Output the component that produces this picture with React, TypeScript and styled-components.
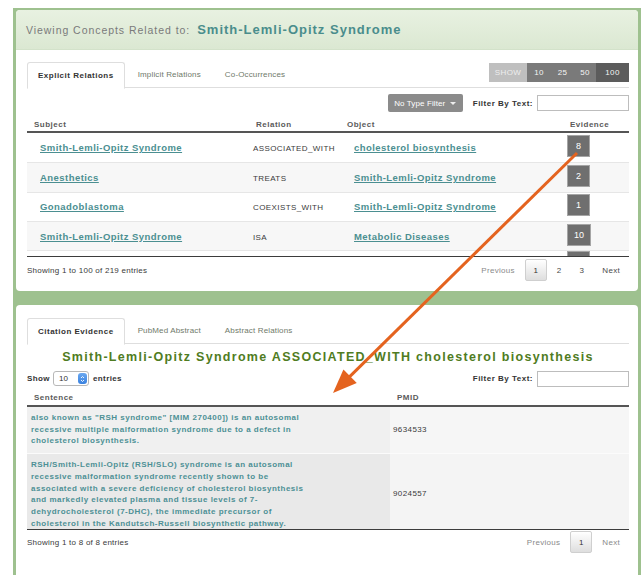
import React from 'react';
import styled, { createGlobalStyle, css } from 'styled-components';

const GlobalStyle = createGlobalStyle`
  html, body { margin: 0; padding: 0; background: #fff; }
  body { font-family: "Liberation Sans", Arial, sans-serif; color: #333; }
  * { box-sizing: border-box; }
`;

const Page = styled.div`
  position: relative;
  width: 642px;
  height: 575px;
  overflow: hidden;
  padding: 8px 1px 0 13px;
`;

const Frame = styled.div`
  height: 100%;
  background: #9ec18f;
  padding: 2px 3px 0 3px;
  display: flex;
  flex-direction: column;
  gap: 14px;
`;

const Panel = styled.section<{ $height?: number }>`
  background: #fff;
  border-radius: 4px;
  overflow: hidden;
  ${p => (p.$height ? css`height: ${p.$height}px; flex: none;` : css`flex: 1; border-radius: 4px 4px 0 0;`)}
`;

const Header = styled.header`
  height: 40px;
  display: flex;
  align-items: center;
  padding-left: 10px;
  background: linear-gradient(#e8f1e1, #dbe8d2);
  border-bottom: 1px solid #d3e2ca;
`;

const HeaderLead = styled.span`
  font-size: 10.5px;
  letter-spacing: 0.95px;
  color: #7a7a7a;
  margin-right: 7px;
`;

const HeaderConcept = styled.span`
  font-size: 13px;
  font-weight: 700;
  letter-spacing: 1px;
  color: #4a8d8c;
`;

const Body = styled.div<{ $top: number }>`
  padding: ${p => p.$top}px 9px 0 11px;
`;

const TabBar = styled.div`
  display: flex;
  align-items: flex-start;
  height: 26px;
  border-bottom: 1px solid #dedede;
`;

const Tab = styled.div<{ $active?: boolean }>`
  height: 26px;
  padding: 0 11px;
  margin-right: 2px;
  line-height: 25px;
  font-size: 8px;
  letter-spacing: 0.15px;
  white-space: nowrap;
  color: #6f7a6a;
  ${p =>
    p.$active &&
    css`
      padding: 0 10px;
      height: 27px;
      font-weight: 700;
      letter-spacing: 0.5px;
      color: #333;
      background: #fff;
      border: 1px solid #dedede;
      border-bottom-color: #fff;
      border-radius: 3px 3px 0 0;
    `}
`;

const ShowGroup = styled.div`
  margin-left: auto;
  margin-top: 1px;
  display: flex;
  height: 19px;
`;

const ShowButton = styled.div<{ $tone: 'label' | 'mid' | 'dark'; $w: number }>`
  width: ${p => p.$w}px;
  display: flex;
  align-items: center;
  justify-content: center;
  font-size: 8px;
  letter-spacing: 0.4px;
  color: ${p => (p.$tone === 'label' ? '#eeeeee' : '#f4f4f4')};
  background: ${p => (p.$tone === 'label' ? '#bfbfbf' : p.$tone === 'mid' ? '#7a7a7a' : '#5c5c5c')};
`;

const ToolRow = styled.div<{ $mt: number; $h: number }>`
  display: flex;
  align-items: center;
  margin-top: ${p => p.$mt}px;
  height: ${p => p.$h}px;
`;

const TypeButton = styled.div`
  margin-left: auto;
  width: 75px;
  height: 18px;
  display: flex;
  align-items: center;
  justify-content: center;
  gap: 5px;
  background: #8b8b8b;
  border-radius: 2px;
  color: #fff;
  font-size: 8px;
  letter-spacing: 0.1px;
`;

const Caret = styled.span`
  width: 0;
  height: 0;
  border-left: 3px solid transparent;
  border-right: 3px solid transparent;
  border-top: 3px solid #eee;
`;

const FilterLabel = styled.span<{ $auto?: boolean }>`
  margin: 0 4px 0 ${p => (p.$auto ? 'auto' : '10px')};
  font-size: 8px;
  font-weight: 700;
  letter-spacing: 0.5px;
  color: #333;
`;

const FilterInput = styled.div`
  width: 92px;
  height: 16px;
  border: 1px solid #bdbdbd;
  background: #fff;
`;

const HeadRow = styled.div<{ $cols: string; $mt: number; $h: number }>`
  display: grid;
  grid-template-columns: ${p => p.$cols};
  align-items: center;
  margin-top: ${p => p.$mt}px;
  height: ${p => p.$h}px;
  border-bottom: 2px solid #555;
`;

const HeadCell = styled.div`
  padding-left: 7px;
  font-size: 8px;
  font-weight: 700;
  letter-spacing: 0.5px;
  color: #5a5a5a;
`;

const ScrollBody = styled.div<{ $h: number }>`
  height: ${p => p.$h}px;
  overflow: hidden;
  border-bottom: 1px solid #3c3c3c;
`;

const RelRow = styled.div<{ $cols: string; $striped: boolean }>`
  display: grid;
  grid-template-columns: ${p => p.$cols};
  align-items: center;
  height: 29.3px;
  padding-bottom: 3px;
  border-top: 1px solid #e6e6e6;
  background: ${p => (p.$striped ? '#f7f7f7' : '#fff')};
  &:first-child { border-top: none; }
`;

const Cell = styled.div<{ $pl: number }>`
  padding-left: ${p => p.$pl}px;
  min-width: 0;
  white-space: nowrap;
`;

const ConceptLink = styled.a`
  font-size: 9.5px;
  font-weight: 700;
  letter-spacing: 0.45px;
  color: #4b8f91;
  text-decoration: underline;
`;

const RelationText = styled.span`
  font-size: 8px;
  letter-spacing: 0.4px;
  color: #3a3a3a;
`;

const Badge = styled.span`
  display: inline-flex;
  align-items: center;
  justify-content: center;
  min-width: 23px;
  height: 22px;
  padding: 0 6px;
  background: #6f6f6f;
  border: 1px solid #a5a5a5;
  color: #fff;
  font-size: 9px;
`;

const Footer = styled.div<{ $mt: number }>`
  display: flex;
  align-items: center;
  justify-content: space-between;
  margin-top: ${p => p.$mt}px;
  height: 22px;
`;

const Info = styled.span`
  font-size: 8px;
  letter-spacing: 0.25px;
  color: #3a3a3a;
`;

const Pager = styled.div`
  display: flex;
  align-items: center;
  height: 22px;
`;

const PageLink = styled.span<{ $muted?: boolean }>`
  padding: 0 9px;
  font-size: 8px;
  letter-spacing: 0.3px;
  color: ${p => (p.$muted ? '#8a8a8a' : '#4a4a4a')};
`;

const PageCurrent = styled.span`
  width: 22px;
  height: 22px;
  margin: 0 1px;
  display: flex;
  align-items: center;
  justify-content: center;
  font-size: 8px;
  color: #333;
  border: 1px solid #cfcfcf;
  border-radius: 2px;
  background: linear-gradient(#ffffff, #dedede);
`;

const EvidenceTitle = styled.h2`
  margin: 5px 0 0;
  line-height: 16px;
  text-align: center;
  font-size: 12.5px;
  font-weight: 700;
  letter-spacing: 1.3px;
  color: #4f7c22;
`;

const SmallBold = styled.span`
  font-size: 8px;
  font-weight: 700;
  letter-spacing: 0.4px;
  color: #333;
`;

const LengthSelect = styled.div`
  margin: 0 4px 0 3px;
  width: 36px;
  height: 15px;
  display: flex;
  align-items: center;
  justify-content: space-between;
  padding: 0 1px 0 5px;
  border: 1px solid #b8b8b8;
  border-radius: 3px;
  background: #fff;
  font-size: 8px;
  color: #333;
`;

const Stepper = styled.span`
  width: 9px;
  height: 11px;
  border-radius: 3px;
  background: linear-gradient(#6aa8f0, #3a82e0);
  display: flex;
  align-items: center;
  justify-content: center;
`;

const SentenceRow = styled.div<{ $cols: string; $main: string; $side: string }>`
  display: grid;
  grid-template-columns: ${p => p.$cols};
  border-top: 1px solid #fbfbfb;
  background: ${p => p.$side};
  & > :first-child { background: ${p => p.$main}; }
  &:first-child { border-top: none; }
`;

const SentenceCell = styled.div`
  padding: 5px 4px 6px;
  font-size: 8px;
  font-weight: 700;
  line-height: 11.7px;
  letter-spacing: 0.5px;
  color: #4d9095;
  white-space: nowrap;
`;

const PmidCell = styled.div`
  display: flex;
  align-items: center;
  padding: 0 0 2px 3px;
  font-size: 8px;
  letter-spacing: 0.4px;
  color: #3a3a3a;
`;

const Overlay = styled.svg`
  position: absolute;
  inset: 0;
  pointer-events: none;
`;

type Relation = { subject: string; relation: string; object: string; evidence: number };

const relations: Relation[] = [
  { subject: 'Smith-Lemli-Opitz Syndrome', relation: 'ASSOCIATED_WITH', object: 'cholesterol biosynthesis', evidence: 8 },
  { subject: 'Anesthetics', relation: 'TREATS', object: 'Smith-Lemli-Opitz Syndrome', evidence: 2 },
  { subject: 'Gonadoblastoma', relation: 'COEXISTS_WITH', object: 'Smith-Lemli-Opitz Syndrome', evidence: 1 },
  { subject: 'Smith-Lemli-Opitz Syndrome', relation: 'ISA', object: 'Metabolic Diseases', evidence: 10 },
];

const sentences: { lines: string[]; pmid: string; main: string; side: string }[] = [
  {
    lines: [
      'also known as "RSH syndrome" [MIM 270400]) is an autosomal',
      'recessive multiple malformation syndrome due to a defect in',
      'cholesterol biosynthesis.',
    ],
    pmid: '9634533',
    main: '#f0f0f0',
    side: '#f6f6f6',
  },
  {
    lines: [
      'RSH/Smith-Lemli-Opitz (RSH/SLO) syndrome is an autosomal',
      'recessive malformation syndrome recently shown to be',
      'associated with a severe deficiency of cholesterol biosynthesis',
      'and markedly elevated plasma and tissue levels of 7-',
      'dehydrocholesterol (7-DHC), the immediate precursor of',
      'cholesterol in the Kandutsch-Russell biosynthetic pathway.',
    ],
    pmid: '9024557',
    main: '#e9e9e9',
    side: '#f4f4f4',
  },
];

const REL_COLS = '222px 91px 223px 1fr';
const SENT_COLS = '363px 1fr';

const showOptions: { label: string; tone: 'label' | 'mid' | 'dark'; w: number }[] = [
  { label: 'SHOW', tone: 'label', w: 38 },
  { label: '10', tone: 'mid', w: 24 },
  { label: '25', tone: 'mid', w: 23 },
  { label: '50', tone: 'mid', w: 22 },
  { label: '100', tone: 'dark', w: 33 },
];

// Orange pointer from the evidence count down to the citation table
const arrowStart = { x: 577, y: 153 };
const arrowTip = { x: 333, y: 393 };
const headLen = 24;
const headHalf = 9.5;
const dx = arrowTip.x - arrowStart.x;
const dy = arrowTip.y - arrowStart.y;
const len = Math.hypot(dx, dy);
const ux = dx / len;
const uy = dy / len;
const baseX = arrowTip.x - ux * headLen;
const baseY = arrowTip.y - uy * headLen;
const headPoints = [
  `${arrowTip.x},${arrowTip.y}`,
  `${baseX - uy * headHalf},${baseY + ux * headHalf}`,
  `${baseX + uy * headHalf},${baseY - ux * headHalf}`,
].join(' ');

export default function App() {
  return (
    <>
      <GlobalStyle />
      <Page>
        <Frame>
          <Panel $height={281}>
            <Header>
              <HeaderLead>Viewing Concepts Related to:</HeaderLead>
              <HeaderConcept>Smith-Lemli-Opitz Syndrome</HeaderConcept>
            </Header>
            <Body $top={12}>
              <TabBar>
                <Tab $active>Explicit Relations</Tab>
                <Tab>Implicit Relations</Tab>
                <Tab>Co-Occurrences</Tab>
                <ShowGroup>
                  {showOptions.map(o => (
                    <ShowButton key={o.label} $tone={o.tone} $w={o.w}>
                      {o.label}
                    </ShowButton>
                  ))}
                </ShowGroup>
              </TabBar>
              <ToolRow $mt={6} $h={18}>
                <TypeButton>
                  No Type Filter <Caret />
                </TypeButton>
                <FilterLabel>Filter By Text:</FilterLabel>
                <FilterInput />
              </ToolRow>
              <HeadRow $cols={REL_COLS} $mt={6} $h={15}>
                <HeadCell>Subject</HeadCell>
                <HeadCell>Relation</HeadCell>
                <HeadCell>Object</HeadCell>
                <HeadCell>Evidence</HeadCell>
              </HeadRow>
              <ScrollBody $h={124}>
                {relations.map((r, i) => (
                  <RelRow key={i} $cols={REL_COLS} $striped={i % 2 === 1}>
                    <Cell $pl={13}>
                      <ConceptLink>{r.subject}</ConceptLink>
                    </Cell>
                    <Cell $pl={4}>
                      <RelationText>{r.relation}</RelationText>
                    </Cell>
                    <Cell $pl={14}>
                      <ConceptLink>{r.object}</ConceptLink>
                    </Cell>
                    <Cell $pl={4}>
                      <Badge>{r.evidence}</Badge>
                    </Cell>
                  </RelRow>
                ))}
                {/* next row, scrolled just below the fold */}
                <RelRow $cols={REL_COLS} $striped={false}>
                  <Cell $pl={13} />
                  <Cell $pl={4} />
                  <Cell $pl={14} />
                  <Cell $pl={4}>
                    <Badge />
                  </Cell>
                </RelRow>
              </ScrollBody>
              <Footer $mt={2}>
                <Info>Showing 1 to 100 of 219 entries</Info>
                <Pager>
                  <PageLink $muted>Previous</PageLink>
                  <PageCurrent>1</PageCurrent>
                  <PageLink>2</PageLink>
                  <PageLink>3</PageLink>
                  <PageLink>Next</PageLink>
                </Pager>
              </Footer>
            </Body>
          </Panel>

          <Panel>
            <Body $top={13}>
              <TabBar>
                <Tab $active>Citation Evidence</Tab>
                <Tab>PubMed Abstract</Tab>
                <Tab>Abstract Relations</Tab>
              </TabBar>
              <EvidenceTitle>Smith-Lemli-Opitz Syndrome ASSOCIATED_WITH cholesterol biosynthesis</EvidenceTitle>
              <ToolRow $mt={5} $h={17}>
                <SmallBold>Show</SmallBold>
                <LengthSelect>
                  10
                  <Stepper>
                    <svg width="5" height="8" viewBox="0 0 5 8">
                      <path d="M1 3 L2.5 1.5 L4 3 M1 5 L2.5 6.5 L4 5" stroke="#fff" strokeWidth="0.9" fill="none" />
                    </svg>
                  </Stepper>
                </LengthSelect>
                <SmallBold>entries</SmallBold>
                <FilterLabel $auto>Filter By Text:</FilterLabel>
                <FilterInput />
              </ToolRow>
              <HeadRow $cols={SENT_COLS} $mt={3} $h={17}>
                <HeadCell>Sentence</HeadCell>
                <HeadCell>PMID</HeadCell>
              </HeadRow>
              <ScrollBody $h={123}>
                {sentences.map(s => (
                  <SentenceRow key={s.pmid} $cols={SENT_COLS} $main={s.main} $side={s.side}>
                    <SentenceCell>
                      {s.lines.map((line, i) => (
                        <React.Fragment key={i}>
                          {line}
                          {i < s.lines.length - 1 && <br />}
                        </React.Fragment>
                      ))}
                    </SentenceCell>
                    <PmidCell>{s.pmid}</PmidCell>
                  </SentenceRow>
                ))}
              </ScrollBody>
              <Footer $mt={1}>
                <Info>Showing 1 to 8 of 8 entries</Info>
                <Pager>
                  <PageLink $muted>Previous</PageLink>
                  <PageCurrent>1</PageCurrent>
                  <PageLink $muted>Next</PageLink>
                </Pager>
              </Footer>
            </Body>
          </Panel>
        </Frame>
        <Overlay width="642" height="575" viewBox="0 0 642 575">
          <line
            x1={arrowStart.x}
            y1={arrowStart.y}
            x2={baseX + ux * 2}
            y2={baseY + uy * 2}
            stroke="#e4631f"
            strokeWidth="3"
          />
          <polygon points={headPoints} fill="#e4631f" />
        </Overlay>
      </Page>
    </>
  );
}
